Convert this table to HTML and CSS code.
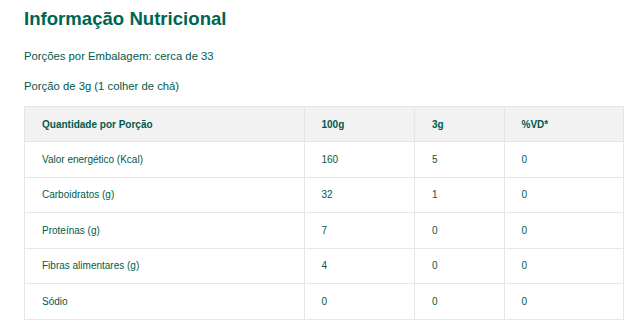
FILE: index.html
```html
<!DOCTYPE html>
<html lang="pt">
<head>
<meta charset="utf-8">
<link rel="stylesheet" href="styles.css">
</head>
<body>
<div class="page">
  <h1 class="title">Informação Nutricional</h1>
  <p class="info">Porções por Embalagem: cerca de 33</p>
  <p class="info">Porção de 3g (1 colher de chá)</p>
  <table class="nutri">
    <thead>
      <tr><th class="c1">Quantidade por Porção</th><th class="c2">100g</th><th class="c3">3g</th><th class="c4">%VD*</th></tr>
    </thead>
    <tbody>
      <tr><td>Valor energético (Kcal)</td><td>160</td><td>5</td><td>0</td></tr>
      <tr><td>Carboidratos (g)</td><td>32</td><td>1</td><td>0</td></tr>
      <tr><td>Proteínas (g)</td><td>7</td><td>0</td><td>0</td></tr>
      <tr><td>Fibras alimentares (g)</td><td>4</td><td>0</td><td>0</td></tr>
      <tr><td>Sódio</td><td>0</td><td>0</td><td>0</td></tr>
    </tbody>
  </table>
</div>
</body>
</html>
```
FILE: styles.css
```css
html, body { margin: 0; padding: 0; background: #fff; }
body { font-family: "Liberation Sans", Arial, sans-serif; color: #02594a; }
.page { padding: 7px 18px 0 24px; }
.title { margin: 0; font-size: 18.6px; line-height: 24px; font-weight: bold; color: #006550; }
.info { margin: 0; font-size: 11.3px; line-height: 14px; }
.info:nth-of-type(1) { margin-top: 18px; }
.info:nth-of-type(2) { margin-top: 16px; }
.nutri { margin-top: 13px; width: 600px; border-collapse: collapse; font-size: 10px; }
.nutri th, .nutri td { border: 1px solid #e6e6e6; padding: 0 0 0 17px; height: 34.5px; text-align: left; }
.nutri th { background: #f2f2f2; font-weight: bold; height: 34px; }
.c1 { width: 263px; }
.c2 { width: 93px; }
.c3 { width: 72px; }
.c4 { width: 102px; }
```
